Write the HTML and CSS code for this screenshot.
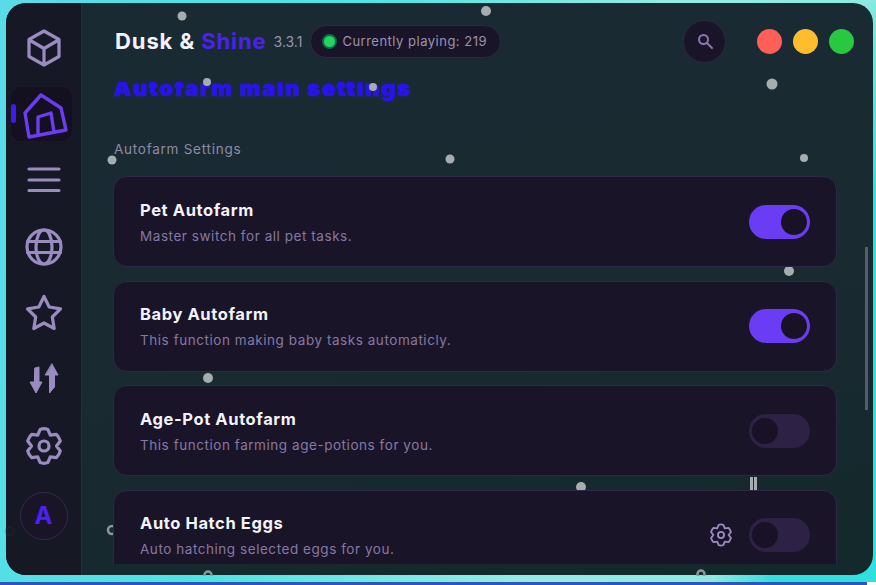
FILE: index.html
```html
<!DOCTYPE html>
<html lang="en">
<head>
  <meta charset="UTF-8">
  <title>Dusk &amp; Shine</title>
  <link rel="stylesheet" href="styles.css">
</head>
<body>
  <div class="stage">
    <div class="window">
      <!-- Sidebar -->
      <nav class="sidebar">
        <a class="nav-item">
          <svg class="nav-icon" viewBox="0 0 36 36"><path d="M18 1 33 9.500V26.500L18 35 3 26.500V9.500Z M3.500 10 18 18.500 32.500 10 M18 18.500V34.500"/></svg>
        </a>
        <a class="nav-item active">
          <span class="active-mark"></span>
          <svg class="nav-icon home" viewBox="0 0 50 50"><path d="M20 4 40 17 45 39 8 46 4 22Z M17 44V26L30 22 33 41"/></svg>
        </a>
        <a class="nav-item">
          <svg class="nav-icon" viewBox="0 0 36 36"><path d="M3 7H33 M3 18H33 M3 28.500H33"/></svg>
        </a>
        <a class="nav-item">
          <svg class="nav-icon" viewBox="0 0 36 36"><circle cx="18" cy="18" r="17"/><ellipse cx="18" cy="18" rx="8" ry="17"/><path d="M1.500 12.500H34.500 M1.500 23.500H34.500"/></svg>
        </a>
        <a class="nav-item">
          <svg class="nav-icon" viewBox="0 0 36 36"><path d="M18 1.500 23.200 12 34.500 13.800 26.300 22 28.200 33.500 18 28 7.800 33.500 9.700 22 1.500 13.800 12.800 12Z"/></svg>
        </a>
        <a class="nav-item">
          <svg class="nav-icon solid" viewBox="0 0 36 36"><path d="M9 7l4-1v15h3l-6 11-6-11h4Z M26 3l6 11h-3.500v12l-5 6V14h-4Z"/></svg>
        </a>
        <a class="nav-item">
          <svg class="nav-icon" viewBox="0 0 36 36"><path d="M14.200 1.400Q18 0 21.800 1.400L24.250 7.200 30.400 6.400Q33 9 34.300 13L30.500 18 34.300 23Q33 27 30.400 29.600L24.250 28.800 21.800 34.600Q18 36 14.200 34.600L11.750 28.800 5.600 29.600Q3 27 1.700 23L5.500 18 1.700 13Q3 9 5.600 6.400L11.750 7.200Z"/><circle cx="18" cy="18" r="5"/></svg>
        </a>
        <div class="avatar">A</div>
      </nav>

      <!-- Main panel -->
      <main class="main">
        <header class="topbar">
          <h1 class="brand">Dusk &amp; <span class="brand-accent">Shine</span></h1>
          <span class="version">3.3.1</span>
          <div class="status-pill">
            <span class="status-dot"></span>
            <span>Currently playing: 219</span>
          </div>
          <button class="search-btn">
            <svg viewBox="0 0 18 18" width="18" height="18"><circle cx="7.500" cy="7.500" r="4.500"/><path d="M11 11l5 5"/></svg>
          </button>
          <div class="traffic">
            <span class="light red"></span>
            <span class="light yellow"></span>
            <span class="light green"></span>
          </div>
        </header>

        <div class="content">
          <h2 class="page-title">Autofarm main settings</h2>
          <p class="section-label">Autofarm Settings</p>

          <div class="card">
            <div class="card-text">
              <h3>Pet Autofarm</h3>
              <p>Master switch for all pet tasks.</p>
            </div>
            <span class="toggle on"><span class="knob"></span></span>
          </div>

          <div class="card">
            <div class="card-text">
              <h3>Baby Autofarm</h3>
              <p>This function making baby tasks automaticly.</p>
            </div>
            <span class="toggle on"><span class="knob"></span></span>
          </div>

          <div class="card">
            <div class="card-text">
              <h3>Age-Pot Autofarm</h3>
              <p>This function farming age-potions for you.</p>
            </div>
            <span class="toggle"><span class="knob"></span></span>
          </div>

          <div class="card">
            <div class="card-text">
              <h3>Auto Hatch Eggs</h3>
              <p>Auto hatching selected eggs for you.</p>
            </div>
            <svg class="card-gear" viewBox="0 0 36 36"><path d="M14.200 1.400Q18 0 21.800 1.400L24.250 7.200 30.400 6.400Q33 9 34.300 13L30.500 18 34.300 23Q33 27 30.400 29.600L24.250 28.800 21.800 34.600Q18 36 14.200 34.600L11.750 28.800 5.600 29.600Q3 27 1.700 23L5.500 18 1.700 13Q3 9 5.600 6.400L11.750 7.200Z"/><circle cx="18" cy="18" r="5"/></svg>
            <span class="toggle"><span class="knob"></span></span>
          </div>
        </div>
      </main>
    </div>

    <!-- Floating particles, their place on the canvas is the content -->
    <svg class="particles" viewBox="0 0 876 576" width="876" height="576">
      <circle class="p dim" cx="44" cy="28" r="5"/>
      <circle class="p" cx="182" cy="16" r="4.500"/>
      <circle class="p" cx="486" cy="11" r="5"/>
      <circle class="p" cx="207" cy="82" r="4"/>
      <circle class="p" cx="373" cy="87" r="4"/>
      <circle class="p" cx="772" cy="84" r="5.500"/>
      <circle class="p" cx="112" cy="160" r="4.500"/>
      <circle class="p" cx="450" cy="159" r="4.500"/>
      <circle class="p" cx="804" cy="158" r="4"/>
      <circle class="p" cx="789" cy="271" r="5"/>
      <circle class="p" cx="208" cy="378" r="5"/>
      <circle class="p" cx="581" cy="487" r="5"/>
      <rect class="p" x="750" y="477" width="3" height="13"/>
      <rect class="p" x="754" y="477" width="3" height="13"/>
      <circle class="p ring" cx="10" cy="531" r="4"/>
      <circle class="p ring" cx="112" cy="530" r="4"/>
      <circle class="p ring" cx="208" cy="575" r="3.500"/>
      <circle class="p ring" cx="701" cy="574" r="3.500"/>
    </svg>

    <span class="scroll-thumb"></span>
  </div>
  <div class="bottom-strip"></div>
</body>
</html>
```

FILE: styles.css
```css
* {
  box-sizing: border-box;
}

html, body {
  height: 100%;
}

body {
  margin: 0;
  overflow: hidden;
  display: flex;
  flex-direction: column;
  font-family: Inter, "Noto Sans", sans-serif;
  background: #fff;
}

.stage {
  position: relative;
  flex: 1;
  min-height: 0;
  display: flex;
  padding: 3px 3px 7px 6px;
  background: linear-gradient(105deg, #5adbe8 0%, #4ce4e4 35%, #93ece2 65%, #8eeae0 84%, #30dfe0 90%);
}

.bottom-strip {
  height: 3px;
  flex: none;
  margin-right: 9px;
  background: #2f55b8;
}

/* Window */
.window {
  flex: 1;
  min-width: 0;
  display: flex;
  border-radius: 20px;
  overflow: hidden;
  background: linear-gradient(170deg, #1a2a33 0%, #192a31 55%, #14292c 100%);
}

/* Sidebar */
.sidebar {
  position: relative;
  z-index: 2;
  width: 76px;
  flex: none;
  display: flex;
  flex-direction: column;
  align-items: center;
  padding-top: 12px;
  background: rgba(23, 24, 36, 0.96);
  border-right: 1px solid #2b2b42;
}

.nav-item {
  position: relative;
  width: 61px;
  height: 66.300px;
  margin-left: 1px;
  display: flex;
  align-items: center;
  justify-content: center;
  flex: none;
}

.nav-icon {
  width: 36px;
  height: 36px;
  overflow: visible;
  fill: none;
  stroke: #9a8bc0;
  stroke-width: 3.200;
  stroke-linejoin: round;
  stroke-linecap: round;
}

.nav-icon.solid {
  fill: #9a8bc0;
  stroke-width: 1;
}

.nav-item.active {
  align-self: flex-start;
  height: 54px;
  margin: 6px 0 6px 5px;
  background: #14101f;
  border-radius: 10px;
}

.nav-item.active .home {
  width: 50px;
  height: 50px;
  margin: 4px 0 0 8px;
  flex: none;
  stroke: #6a3df0;
  stroke-width: 3.400;
}

.active-mark {
  position: absolute;
  left: 0;
  top: 17px;
  width: 5px;
  height: 19px;
  border-radius: 3px;
  background: #3d1cf0;
}

.avatar {
  width: 48px;
  height: 48px;
  margin-top: 13px;
  display: flex;
  align-items: center;
  justify-content: center;
  border-radius: 50%;
  border: 1px solid #33274f;
  background: #191526;
  color: #4a22f5;
  font-size: 24px;
  font-weight: 700;
}

/* Main panel */
.main {
  flex: 1;
  min-width: 0;
  display: flex;
  flex-direction: column;
  padding-left: 31px;
}

.topbar {
  position: relative;
  z-index: 2;
  height: 79px;
  flex: none;
  display: flex;
  align-items: center;
  padding: 0 19px 3px 2px;
}

.brand {
  margin: 0;
  font-size: 22px;
  font-weight: 700;
  letter-spacing: 0.9px;
  color: #f4f2fa;
}

.brand-accent {
  color: #4a22f0;
}

.version {
  margin-left: 7px;
  font-size: 14px;
  color: #9a93ad;
}

.status-pill {
  margin-left: 8px;
  height: 33px;
  width: 191px;
  display: flex;
  align-items: center;
  gap: 5px;
  padding-left: 11px;
  border: 1px solid #2e2747;
  border-radius: 17px;
  background: #1a1429;
  color: #9a93ad;
  font-size: 13px;
  letter-spacing: 0.5px;
}

.status-dot {
  width: 15px;
  height: 15px;
  border-radius: 50%;
  background: #1ed760;
  border: 2px solid #0f6d42;
}

.search-btn {
  margin-left: auto;
  width: 43px;
  height: 43px;
  padding: 0;
  display: flex;
  align-items: center;
  justify-content: center;
  border: 1px solid #2e2747;
  border-radius: 50%;
  background: #1a1429;
}

.search-btn svg {
  fill: none;
  stroke: #8a77b0;
  stroke-width: 2;
  stroke-linecap: round;
}

.traffic {
  margin-left: 31px;
  display: flex;
  gap: 11px;
}

.light {
  width: 25px;
  height: 25px;
  border-radius: 50%;
}

.red { background: #ff5f57; }
.yellow { background: #ffbd2e; }
.green { background: #28c940; }

/* Scrolled content */
.content {
  flex: 1;
  min-height: 0;
  overflow: hidden;
  padding: 0 36px 0 0;
  margin-bottom: 11px;
}

.page-title {
  margin: -7px 0 0 1px;
  font-size: 22px;
  line-height: 26px;
  font-weight: 900;
  letter-spacing: 1.700px;
  color: #2a12f0;
  -webkit-text-stroke: 0.6px #2a12f0;
  white-space: nowrap;
}

.section-label {
  margin: 40px 0 19px 1px;
  font-size: 13.500px;
  line-height: 16px;
  letter-spacing: 0.75px;
  color: #8f8aa5;
}

.card {
  position: relative;
  z-index: 2;
  height: 91px;
  margin-bottom: 13.670px;
  display: flex;
  align-items: center;
  padding: 0 26px;
  background: #1a1429;
  border: 1px solid #2e2747;
  border-radius: 14px;
}

.card-text {
  flex: 1;
}

.card-text h3 {
  margin: 0 0 8px;
  font-size: 16.500px;
  line-height: 20px;
  font-weight: 700;
  letter-spacing: 0.6px;
  color: #f4f2fa;
}

.card-text p {
  margin: 0;
  font-size: 13.500px;
  line-height: 16px;
  letter-spacing: 0.55px;
  color: #8678a3;
}

.card-gear {
  width: 22px;
  height: 22px;
  margin-right: 17px;
  overflow: visible;
  fill: none;
  stroke: #9a8bc0;
  stroke-width: 3;
  stroke-linejoin: round;
}

.toggle {
  width: 61px;
  height: 34px;
  padding: 4px 3px;
  display: flex;
  border-radius: 17px;
  background: #2d2145;
}

.toggle.on {
  justify-content: flex-end;
  background: #6a3df5;
}

.knob {
  width: 26px;
  height: 26px;
  border-radius: 50%;
  background: #191226;
}

/* Decoration */
.particles {
  position: absolute;
  left: 0;
  top: 0;
  z-index: 1;
  pointer-events: none;
}

.p {
  fill: #a6adb0;
}

.p.dim {
  fill: #3b3d48;
}

.p.ring {
  fill: none;
  stroke: #8f9698;
  stroke-width: 2.500;
}

.scroll-thumb {
  position: absolute;
  z-index: 2;
  left: 865px;
  top: 247px;
  width: 3px;
  height: 163px;
  background: #535c70;
}
```
